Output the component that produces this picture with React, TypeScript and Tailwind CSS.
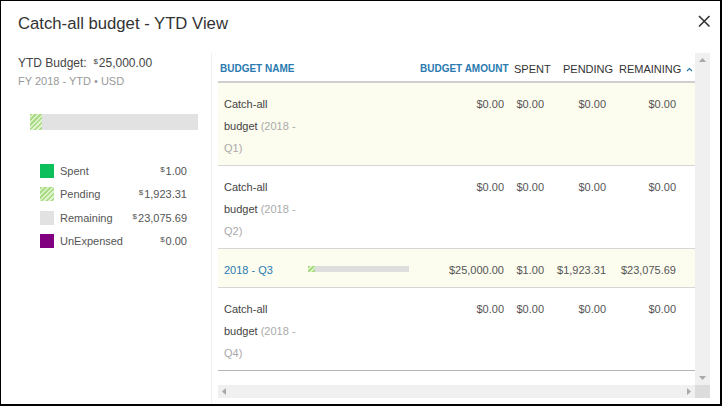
import React from "react";

const hatch =
  "bg-[repeating-linear-gradient(135deg,#a9dc85_0px,#a9dc85_1.5px,#def3cc_1.5px,#def3cc_3.5px)]";

function Money({ v, cls = "" }: { v: string; cls?: string }) {
  return (
    <span className={cls}>
      <span className="text-[8px] leading-none align-[3px] mr-[1px]">$</span>
      {v}
    </span>
  );
}

type Row = {
  kind: "text" | "bar";
  q?: string;
  amount: string;
  spent: string;
  pending: string;
  remaining: string;
  tint: boolean;
};

const rows: Row[] = [
  { kind: "text", q: "Q1", amount: "$0.00", spent: "$0.00", pending: "$0.00", remaining: "$0.00", tint: true },
  { kind: "text", q: "Q2", amount: "$0.00", spent: "$0.00", pending: "$0.00", remaining: "$0.00", tint: false },
  { kind: "bar", amount: "$25,000.00", spent: "$1.00", pending: "$1,923.31", remaining: "$23,075.69", tint: true },
  { kind: "text", q: "Q4", amount: "$0.00", spent: "$0.00", pending: "$0.00", remaining: "$0.00", tint: false },
];

export default function App() {
  return (
    <div className="w-[722px] h-[406px] bg-white border border-black border-r-2 border-b-2 flex flex-col overflow-hidden font-['Liberation_Sans',Arial,sans-serif]">
      {/* Title bar */}
      <div className="h-[52px] shrink-0 flex justify-between items-start pl-[17px] pr-[10px] pt-[12px]">
        <h1 className="text-[16.7px] leading-[22px] text-[#333]">Catch-all budget - YTD View</h1>
        <svg width="14" height="14" viewBox="0 0 14 14" className="mt-[1px] mr-[-1px]">
          <path d="M2 2 L12.5 12.5 M12.5 2 L2 12.5" stroke="#333" strokeWidth="1.6" fill="none" />
        </svg>
      </div>

      <div className="flex flex-1 min-h-0">
        {/* Left summary */}
        <div className="w-[210px] shrink-0 pl-[17px] pt-[2px]">
          <div className="text-[12px] leading-[16px] text-[#444]">
            YTD Budget:&nbsp; <Money v="25,000.00" />
          </div>
          <div className="mt-[3px] text-[11px] leading-[14px] text-[#999]">FY 2018 - YTD • USD</div>
          <div className="mt-[26px] ml-[12px] w-[168px] h-[16px] bg-[#e2e2e2] flex">
            <div className={`w-[12px] h-full ${hatch}`} />
          </div>
          <div className="mt-[29px] ml-[22px] w-[147px] text-[11px] text-[#555]">
            {[
              { label: "Spent", v: "1.00", sw: "bg-[#0cbf5a]" },
              { label: "Pending", v: "1,923.31", sw: hatch },
              { label: "Remaining", v: "23,075.69", sw: "bg-[#e2e2e2]" },
              { label: "UnExpensed", v: "0.00", sw: "bg-[#800080]" },
            ].map((r) => (
              <div key={r.label} className="h-[23.5px] flex items-center">
                <div className={`w-[14px] h-[14px] ${r.sw}`} />
                <span className="ml-[6px] flex-1">{r.label}</span>
                <Money v={r.v} />
              </div>
            ))}
          </div>
        </div>

        {/* Right table */}
        <div className="flex-1 border-l border-[#f0f0f0] pl-[6px] pr-[10px] pb-[6px] flex flex-col">
          <div className="flex flex-1 min-h-0">
            <div className="w-[477px] flex flex-col">
              {/* header */}
              <div className="h-[30px] border-b-2 border-[#cfcfcf] flex items-end pb-[5px] leading-[14px]">
                <div className="w-[90px] pl-[2px] text-[10px] font-bold text-[#2a7ab0]">BUDGET NAME</div>
                <div className="w-[112px]" />
                <div className="w-[90px] pr-[2px] text-right text-[10px] font-bold text-[#2a7ab0] whitespace-nowrap">BUDGET AMOUNT</div>
                <div className="w-[40px] pl-[4px] text-[11px] text-[#333]">SPENT</div>
                <div className="w-[62px] pl-[13px] text-[11px] text-[#333]">PENDING</div>
                <div className="w-[83px] pl-[7px] text-[11px] text-[#333] flex items-center">
                  REMAINING
                  <svg width="7" height="5" viewBox="0 0 7 5" className="ml-[5px]">
                    <polyline points="1,4 3.5,1.5 6,4" stroke="#2a7ab0" strokeWidth="1.2" fill="none" />
                  </svg>
                </div>
              </div>
              {/* rows */}
              {rows.map((r, i) => (
                <div
                  key={i}
                  className={`flex text-[11px] leading-[22px] pt-[10px] pb-[6px] border-b ${
                    i === rows.length - 1 ? "border-[#b5b5b5]" : "border-[#d6d6d6]"
                  } ${r.tint ? "bg-[#fcfcef]" : "bg-white"}`}
                >
                  <div className="w-[90px] pl-[6px] pr-[8px]">
                    {r.kind === "text" ? (
                      <>
                        <div className="text-[#444]">Catch-all</div>
                        <div className="text-[#444]">
                          budget <span className="text-[#aaa]">(2018 -</span>
                        </div>
                        <div className="text-[#aaa]">{r.q})</div>
                      </>
                    ) : (
                      <div className="text-[#2a7ab0]">2018 - Q3</div>
                    )}
                  </div>
                  <div className="w-[112px] flex items-start">
                    {r.kind === "bar" && (
                      <div className="mt-[7px] w-[101px] h-[6px] bg-[#dedede] flex">
                        <div className={`w-[7px] h-full ${hatch}`} />
                      </div>
                    )}
                  </div>
                  <div className="w-[90px] pr-[6px] text-right text-[#555]">{r.amount}</div>
                  <div className="w-[40px] pr-[6px] text-right text-[#555]">{r.spent}</div>
                  <div className="w-[62px] pr-[6px] text-right text-[#555]">{r.pending}</div>
                  <div className="w-[83px] pr-[19px] text-right text-[#555]">{r.remaining}</div>
                </div>
              ))}
            </div>
            {/* vertical scrollbar */}
            <div className="w-[15px] bg-[#f0f0f0] flex flex-col items-center justify-between py-[5px]">
              <svg width="7" height="4" viewBox="0 0 7 4">
                <polygon points="0,4 3.5,0 7,4" fill="#a8a8a8" />
              </svg>
              <svg width="7" height="4" viewBox="0 0 7 4">
                <polygon points="0,0 7,0 3.5,4" fill="#a8a8a8" />
              </svg>
            </div>
          </div>
          {/* horizontal scrollbar */}
          <div className="h-[13px] flex shrink-0">
            <div className="w-[477px] bg-[#f0f0f0] flex items-center justify-between px-[4px]">
              <svg width="4" height="7" viewBox="0 0 4 7">
                <polygon points="4,0 4,7 0,3.5" fill="#a8a8a8" />
              </svg>
              <svg width="4" height="7" viewBox="0 0 4 7">
                <polygon points="0,0 0,7 4,3.5" fill="#a8a8a8" />
              </svg>
            </div>
            <div className="w-[15px] bg-[#dcdcdc]" />
          </div>
        </div>
      </div>
    </div>
  );
}
